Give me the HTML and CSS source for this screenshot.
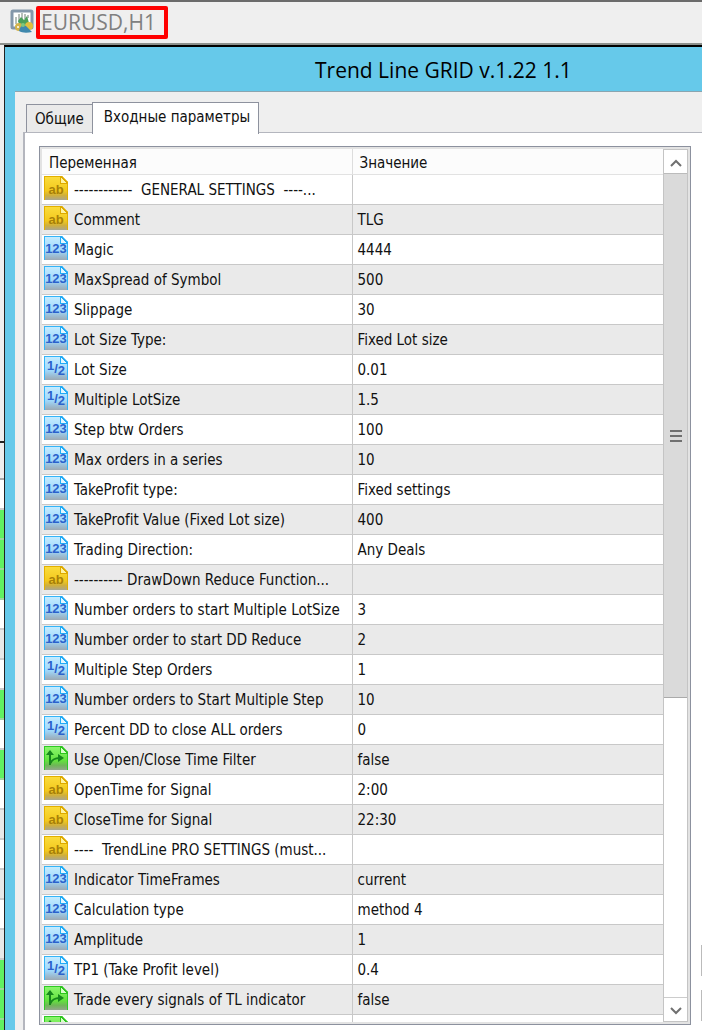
FILE: index.html
```html
<!DOCTYPE html>
<html lang="ru">
<head>
    <meta charset="UTF-8">
    <meta name="viewport" content="width=device-width, initial-scale=1.0">
    <title>Trend Line GRID v.1.22 1.1</title>
    <link rel="stylesheet" href="styles.css">
</head>
<body>
    <!-- arrows of the true/false parameter icon -->
    <svg class="defs" aria-hidden="true">
        <symbol id="arrows" viewBox="0 0 22 22">
            <path d="M5 18V7M5 17C7 12 10 11 15 11" fill="none" stroke="#16861c" stroke-width="2"/>
            <path d="M1 8L5 3L9 8ZM13 7L19 11L13 15Z" fill="#16861c"/>
        </symbol>
    </svg>

    <div class="terminal">
        <header class="chart-bar">
            <svg class="chart-icon" viewBox="0 0 24 24" aria-hidden="true">
                <rect x="2" y="2" width="20" height="17" rx="1" fill="#fff" stroke="#8397aa" stroke-width="3"/>
                <path d="M6 15V8M9 13V5M12 10V4M15 10V5M18 9V6" stroke="#6f7f75"/>
                <path d="M8 12L11 8L14 11L17 7L19 14L14 18L9 15Z" fill="#4ba05a"/>
                <circle cx="9" cy="18" r="4" fill="#d3b34a"/>
                <circle cx="19" cy="17" r="4" fill="#dfc03f"/>
                <path d="M9 22C10 17 13 15 16 17L22 23C17 24 12 24 9 22Z" fill="#3f88ad"/>
                <circle cx="13" cy="16" r="2" fill="#7dc77d"/>
                <circle cx="8" cy="18" r="1" fill="#fff"/>
            </svg>
            <span class="symbol">EURUSD,H1</span>
        </header>

        <div class="workspace">
            <!-- visible edge of the market table behind the dialog -->
            <div class="market">
                <div class="m-head"></div>
                <div class="m-title"></div>
                <div class="m-row"></div>
                <div class="m-row up"></div>
                <div class="m-row up"></div>
                <div class="m-row up"></div>
                <div class="m-row"></div>
                <div class="m-row alt"></div>
                <div class="m-row"></div>
                <div class="m-row up"></div>
                <div class="m-row"></div>
                <div class="m-row up"></div>
                <div class="m-row"></div>
                <div class="m-row alt"></div>
                <div class="m-row"></div>
                <div class="m-row alt"></div>
                <div class="m-row"></div>
                <div class="m-row alt"></div>
                <div class="m-row up"></div>
                <div class="m-row up"></div>
                <div class="m-row up"></div>
            </div>

            <div class="dialog">
                <h1 class="dialog-title">Trend Line GRID v.1.22 1.1</h1>
                <div class="dialog-body">
                    <div class="tabs">
                        <button class="tab" type="button">Общие</button>
                        <button class="tab active" type="button">Входные параметры</button>
                    </div>
                    <div class="page">
                        <div class="list">
                            <div class="list-view">
                                <table>
                                    <thead>
                                        <tr><th>Переменная</th><th>Значение</th></tr>
                                    </thead>
                                    <tbody>
                                        <tr><td><span class="icon ab">ab</span>------------  GENERAL SETTINGS  ----...</td><td></td></tr>
                                        <tr><td><span class="icon ab">ab</span>Comment</td><td>TLG</td></tr>
                                        <tr><td><span class="icon int">123</span>Magic</td><td>4444</td></tr>
                                        <tr><td><span class="icon int">123</span>MaxSpread of Symbol</td><td>500</td></tr>
                                        <tr><td><span class="icon int">123</span>Slippage</td><td>30</td></tr>
                                        <tr><td><span class="icon int">123</span>Lot Size Type:</td><td>Fixed Lot size</td></tr>
                                        <tr><td><span class="icon dbl"><i>1</i>/<b>2</b></span>Lot Size</td><td>0.01</td></tr>
                                        <tr><td><span class="icon dbl"><i>1</i>/<b>2</b></span>Multiple LotSize</td><td>1.5</td></tr>
                                        <tr><td><span class="icon int">123</span>Step btw Orders</td><td>100</td></tr>
                                        <tr><td><span class="icon int">123</span>Max orders in a series</td><td>10</td></tr>
                                        <tr><td><span class="icon int">123</span>TakeProfit type:</td><td>Fixed settings</td></tr>
                                        <tr><td><span class="icon int">123</span>TakeProfit Value (Fixed Lot size)</td><td>400</td></tr>
                                        <tr><td><span class="icon int">123</span>Trading Direction:</td><td>Any Deals</td></tr>
                                        <tr><td><span class="icon ab">ab</span>---------- DrawDown Reduce Function...</td><td></td></tr>
                                        <tr><td><span class="icon int">123</span>Number orders to start Multiple LotSize</td><td>3</td></tr>
                                        <tr><td><span class="icon int">123</span>Number order to start DD Reduce</td><td>2</td></tr>
                                        <tr><td><span class="icon dbl"><i>1</i>/<b>2</b></span>Multiple Step Orders</td><td>1</td></tr>
                                        <tr><td><span class="icon int">123</span>Number orders to Start Multiple Step</td><td>10</td></tr>
                                        <tr><td><span class="icon dbl"><i>1</i>/<b>2</b></span>Percent DD to close ALL orders</td><td>0</td></tr>
                                        <tr><td><span class="icon bool"><svg><use href="#arrows"/></svg></span>Use Open/Close Time Filter</td><td>false</td></tr>
                                        <tr><td><span class="icon ab">ab</span>OpenTime for Signal</td><td>2:00</td></tr>
                                        <tr><td><span class="icon ab">ab</span>CloseTime for Signal</td><td>22:30</td></tr>
                                        <tr><td><span class="icon ab">ab</span>----  TrendLine PRO SETTINGS (must...</td><td></td></tr>
                                        <tr><td><span class="icon int">123</span>Indicator TimeFrames</td><td>current</td></tr>
                                        <tr><td><span class="icon int">123</span>Calculation type</td><td>method 4</td></tr>
                                        <tr><td><span class="icon int">123</span>Amplitude</td><td>1</td></tr>
                                        <tr><td><span class="icon dbl"><i>1</i>/<b>2</b></span>TP1 (Take Profit level)</td><td>0.4</td></tr>
                                        <tr><td><span class="icon bool"><svg><use href="#arrows"/></svg></span>Trade every signals of TL indicator</td><td>false</td></tr>
                                        <tr><td><span class="icon bool"><svg><use href="#arrows"/></svg></span></td><td></td></tr>
                                    </tbody>
                                </table>
                            </div>
                            <div class="scrollbar">
                                <button class="arrow" type="button" aria-label="Вверх">
                                    <svg viewBox="0 0 12 8"><path d="M1 7L6 2L11 7"/></svg>
                                </button>
                                <div class="thumb">
                                    <svg class="grip" viewBox="0 0 12 13"><path d="M0 2H12M0 7H12M0 12H12"/></svg>
                                </div>
                                <div class="track"></div>
                                <button class="arrow down" type="button" aria-label="Вниз">
                                    <svg viewBox="0 0 12 8"><path d="M1 1L6 6L11 1"/></svg>
                                </button>
                            </div>
                        </div>
                        <div class="side">
                            <button type="button" aria-label="Загрузить"></button>
                            <button type="button" aria-label="Сохранить"></button>
                        </div>
                    </div>
                </div>
            </div>
        </div>
    </div>
</body>
</html>
```

FILE: styles.css
```css
* {
    margin: 0;
    padding: 0;
    box-sizing: border-box;
}
body {
    font-family: "DejaVu Sans Condensed", "Noto Sans", sans-serif;
    font-size: 15px;
    font-variant-ligatures: none;
    color: #111;
    background-color: #efefef;
}
button {
    font: inherit;
    color: inherit;
}
.defs {
    position: absolute;
    width: 0;
    height: 0;
}
.terminal {
    display: flex;
    flex-direction: column;
    height: 100vh;
    overflow: hidden;
    border-top: 2px solid #6b6b6b;
}

/* chart caption */
.chart-bar {
    flex: none;
    display: flex;
    align-items: flex-start;
    gap: 2px;
    height: 43px;
    padding: 4px 10px 0;
    border-bottom: 2px solid #8c908c;
}
.chart-icon {
    width: 24px;
    height: 24px;
    margin-top: 3px;
}
.symbol {
    height: 33px;
    padding: 0 8px 0 1px;
    border: 4px solid #f00;
    border-radius: 2px;
    font-family: "Open Sans", "Noto Sans", sans-serif;
    font-size: 21px;
    line-height: 25px;
    color: #808080;
}

.workspace {
    flex: 1;
    display: flex;
    min-height: 0;
}
.market {
    width: 4px;
    background-color: #efefef;
}
.m-head {
    height: 398px;
    border-bottom: 2px solid #222;
}
.m-title {
    height: 37px;
    background-color: #eee;
    border-bottom: 2px solid #aaa;
}
.m-row {
    height: 30px;
    background-color: #fff;
    border-bottom: 2px solid #ccc;
}
.m-row.alt {
    background-color: #e8e8e8;
}
.m-row.up {
    background-color: #61f161;
    border-color: #9cd89c;
}

/* dialog */
.dialog {
    flex: 1;
    display: flex;
    flex-direction: column;
    min-width: 0;
    border-top: 2px solid #000;
    border-left: 1px solid #222;
    background-color: #66c9ea;
    padding-left: 10px;
}
.dialog-title {
    flex: none;
    height: 44px;
    padding-left: 300px;
    font-family: "Open Sans", "Noto Sans", sans-serif;
    font-size: 21px;
    font-weight: normal;
    line-height: 46px;
    white-space: nowrap;
    color: #000;
}
.dialog-body {
    flex: 1;
    display: flex;
    flex-direction: column;
    min-height: 0;
    padding: 10px 0 0 8px;
    border-top: 1px solid #8aa5b0;
    background-color: #efefef;
}
.tabs {
    flex: none;
    display: flex;
    align-items: flex-end;
    height: 30px;
    padding-left: 3px;
}
.tab {
    height: 28px;
    padding: 0 8px;
    border: 1px solid #8e929e;
    border-width: 1px 0 0 1px;
    background-color: #eaeaea;
}
.tab.active {
    height: 32px;
    margin-bottom: -2px;
    padding: 0 8px 3px 11px;
    border-width: 1px 1px 0 1px;
    background-color: #fff;
    z-index: 1;
}
.page {
    flex: 1;
    display: flex;
    gap: 10px;
    min-height: 0;
    padding: 13px 0 5px 14px;
    border: 2px solid #b4b6be;
    border-width: 1px 0 0 2px;
    background-color: #fff;
}

/* parameter list */
.list {
    flex: 1;
    display: flex;
    min-width: 0;
    border: 1px solid #8c919e;
    outline: 2px solid #e3e3e3;
    outline-offset: -3px;
    padding: 2px;
}
.list-view {
    flex: 1;
    min-width: 0;
    overflow: hidden;
}
table {
    width: 100%;
    table-layout: fixed;
    border-collapse: separate;
    border-spacing: 0;
}
th {
    height: 26px;
    padding: 2px 0 0 7px;
    border-right: 1px solid #ddd;
    border-bottom: 1px solid #e2e2e2;
    background-color: #fcfcfc;
    font-weight: normal;
    text-align: left;
}
td {
    height: 30px;
    padding: 1px 0 0 5px;
    border-right: 1px solid #c8c8c8;
    border-bottom: 1px solid #c8c8c8;
    line-height: 28px;
    white-space: pre;
    vertical-align: top;
}
td:first-child {
    padding-left: 2px;
}
th:last-child,
td:last-child {
    border-right: none;
}
tbody tr:nth-child(even) {
    background-color: #eaeaea;
}

/* sheet icon with a folded corner */
.icon {
    position: relative;
    display: inline-flex;
    justify-content: center;
    width: 24px;
    height: 24px;
    margin-right: 6px;
    border: 1px solid #35b5f8;
    border-bottom: none;
    background: linear-gradient(#c4ebff, #9fd8fb 60%, #9cbfd6 80%, #9ba9b3);
    clip-path: polygon(0 0, 18px 0, 24px 6px, 24px 100%, 0 100%);
    font-family: "Liberation Sans", sans-serif;
    font-size: 13px;
    font-weight: bold;
    line-height: 24px;
    color: #2b62cc;
    vertical-align: top;
}
.icon::after {
    content: "";
    position: absolute;
    top: -1px;
    right: -1px;
    width: 7px;
    height: 7px;
    background: linear-gradient(45deg, #e4f7ff 40%, #22aaf5 40%);
    border-left: 1px solid #22aaf5;
    border-bottom: 1px solid #22aaf5;
}
.icon.ab {
    border-color: #e3b000;
    background: linear-gradient(#fbdc3a, #f2c81e 60%, #cfae3c 80%, #aaa68f);
    line-height: 26px;
    color: #a88008;
}
.icon.ab::after {
    background: linear-gradient(45deg, #fff3a0 40%, #dda900 40%);
    border-color: #dda900;
}
.icon.dbl i {
    font-style: normal;
    line-height: 17px;
}
.icon.dbl b {
    line-height: 28px;
}
.icon.bool {
    border-color: #2fcb25;
    background: linear-gradient(#8af56c, #63e03e 60%, #6fb558 80%, #93a68d);
}
.icon.bool::after {
    background: linear-gradient(45deg, #d8ffc8 40%, #2dc41f 40%);
    border-color: #2dc41f;
}
.icon svg {
    flex: none;
    width: 22px;
    height: 22px;
}

.scrollbar {
    flex: none;
    display: flex;
    flex-direction: column;
    width: 25px;
    border: 1px solid #c4c4c4;
    background-color: #fff;
}
.arrow {
    flex: none;
    height: 24px;
    border: none;
    border-bottom: 1px solid #bbb;
    background-color: #fff;
}
.arrow.down {
    border-top: 1px solid #ccc;
    border-bottom: none;
}
.arrow svg {
    width: 12px;
    height: 8px;
}
.arrow path,
.grip path {
    fill: none;
    stroke: #707070;
    stroke-width: 2;
}
.thumb {
    flex: 7;
    display: flex;
    align-items: center;
    justify-content: center;
    border-bottom: 1px solid #aaa;
    background-color: #dadada;
}
.grip {
    width: 12px;
    height: 13px;
}
.track {
    flex: 4;
}

/* left edge of the buttons beside the list */
.side {
    flex: none;
    display: flex;
    flex-direction: column;
    justify-content: flex-end;
    gap: 14px;
    width: 1px;
    padding-bottom: 4px;
    overflow: hidden;
}
.side button {
    flex: none;
    height: 31px;
    border: none;
    background-color: #bbb;
}
```
